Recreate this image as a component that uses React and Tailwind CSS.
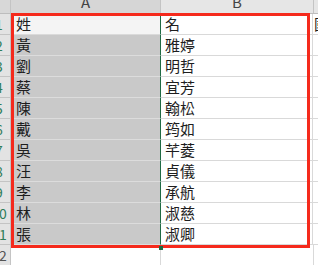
import React from 'react';

const rows = [
  ['姓', '名'],
  ['黃', '雅婷'],
  ['劉', '明哲'],
  ['蔡', '宜芳'],
  ['陳', '翰松'],
  ['戴', '筠如'],
  ['吳', '芊菱'],
  ['汪', '貞儀'],
  ['李', '承航'],
  ['林', '淑慈'],
  ['張', '淑卿'],
];

const font = { fontFamily: '"Noto Sans CJK TC", "Noto Sans", sans-serif' };

// row number cell; the sheet is scrolled so only its right edge shows
function RowHead({ n, selected }) {
  return (
    <div className="relative w-[11px] h-full overflow-hidden border-r border-b border-[#c4c4c4] bg-[#e3e3e3]">
      <span
        className={`absolute left-[-14px] w-[26px] top-0 h-full flex items-center justify-center text-[14px] whitespace-nowrap ${
          selected ? 'text-[#2f7d5a]' : 'text-[#555]'
        }`}
      >
        {n}
      </span>
    </div>
  );
}

export default function App() {
  return (
    <div className="relative w-[318px] h-[265px] overflow-hidden bg-white" style={font}>
      {/* column letters */}
      <div className="flex h-[14px] bg-[#e6e6e6] border-b border-[#bdbdbd]">
        <div className="w-[11px] bg-[#d8d8d8] border-r border-[#c4c4c4]" />
        <div className="w-[150px] bg-[#d6d6d6] border-r border-[#c4c4c4] flex justify-center overflow-hidden">
          <span className="-mt-[9px] text-[15px] text-[#444]">A</span>
        </div>
        <div className="w-[153px] border-r border-[#c4c4c4] flex justify-center overflow-hidden">
          <span className="-mt-[9px] text-[15px] text-[#444]">B</span>
        </div>
        <div className="flex-1" />
      </div>

      {rows.map(([a, b], i) => (
        <div key={i} className="flex h-[21px]">
          <RowHead n={i + 1} selected />
          <div
            className={`w-[150px] flex items-center pl-[5px] border-r border-b text-[15px] text-[#1e1e1e] ${
              i === 0 ? 'bg-[#f4f4f4] border-[#dadada]' : 'bg-[#c9c9c9] border-[#dcdcdc]'
            }`}
          >
            {a}
          </div>
          <div className="w-[153px] flex items-center pl-[4px] border-l border-l-[#1f6a43] border-r border-b border-[#d9d9d9] bg-white text-[15px] text-[#1e1e1e] -ml-px">
            {b}
          </div>
          <div className="flex-1 border-b border-[#d9d9d9] overflow-hidden whitespace-nowrap flex items-center text-[15px] text-[#1e1e1e] pl-[1px]">
            {i === 0 ? '國' : ''}
          </div>
        </div>
      ))}

      <div className="flex h-[21px]">
        <RowHead n={12} />
        <div className="w-[150px] border-r border-b border-[#d9d9d9]" />
        <div className="w-[153px] border-r border-b border-[#d9d9d9]" />
        <div className="flex-1 border-b border-[#d9d9d9]" />
      </div>

      {/* highlight frame around the name table */}
      <div className="absolute left-[11px] top-[13px] w-[299px] h-[235px] border-[3px] border-[#f52a1c] pointer-events-none" />
      {/* fill handle */}
      <div className="absolute left-[159px] top-[246px] w-[4px] h-[4px] bg-[#1f6a43]" />
    </div>
  );
}
